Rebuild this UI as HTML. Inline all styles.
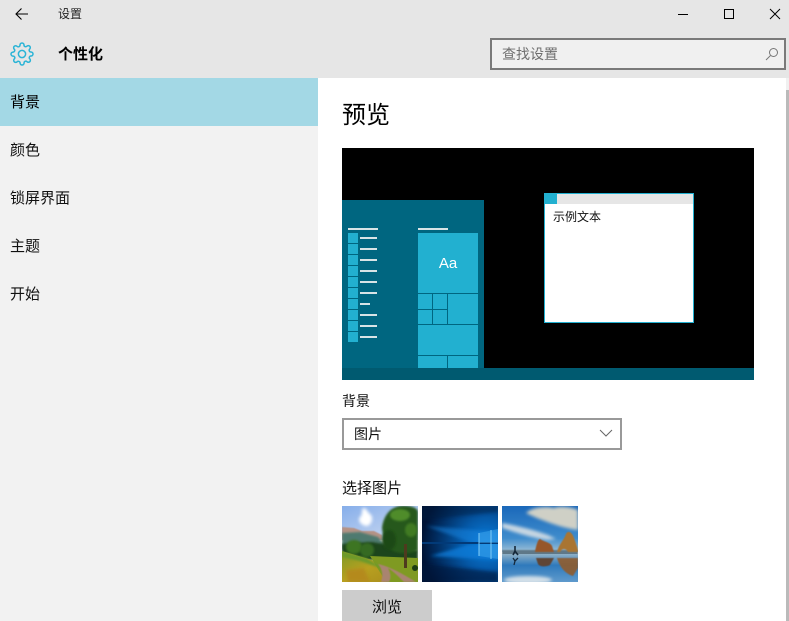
<!DOCTYPE html>
<html lang="zh">
<head>
<meta charset="utf-8">
<title>设置</title>
<style>
html,body{margin:0;padding:0;background:#fff}
#r{position:relative;width:789px;height:621px;overflow:hidden;background:#fff;font-family:"Liberation Sans","Noto Sans CJK SC",sans-serif;color:#000}
#r div,#r svg{position:absolute}
.t{white-space:nowrap;line-height:20px;height:20px;font-size:14px}
.c{background:#22b0d0}
.l{background:#d8e4e6;height:2px;left:360px;width:17px}
.s{left:348px;width:10px;height:10px;background:#22b0d0}
</style>
</head>
<body>
<div id="r">
<div style="left:0;top:0;width:789px;height:78px;background:#e6e6e6"></div>
<div style="left:0;top:78px;width:318px;height:543px;background:#f2f2f2"></div>
<div style="left:0;top:78px;width:318px;height:48px;background:#a3d8e5"></div>
<div style="left:786px;top:78px;width:3px;height:12px;background:#f0f0f0"></div>
<div style="left:786px;top:90px;width:3px;height:531px;background:#bababa"></div>

<svg style="left:15px;top:7px" width="14" height="14" viewBox="0 0 14 14" fill="none" stroke="#000" stroke-width="1.1"><path d="M1 7H13M6.5 1.5L1 7L6.5 12.5"/></svg>
<div class="t" style="left:58px;top:4px;font-size:12px;color:#222">设置</div>
<svg style="left:677px;top:8px" width="12" height="12" fill="none" stroke="#000" stroke-width="1"><path d="M1 6.5H11"/></svg>
<svg style="left:723px;top:8px" width="12" height="12" fill="none" stroke="#000" stroke-width="1"><rect x="1.5" y="1.5" width="9" height="9"/></svg>
<svg style="left:769px;top:8px" width="12" height="12" fill="none" stroke="#000" stroke-width="1"><path d="M1 1L11 11M11 1L1 11"/></svg>

<svg style="left:10px;top:42px" width="24" height="24" viewBox="0 0 24 24" fill="none" stroke="#2bb4d6" stroke-width="1.5"><circle cx="12" cy="12" r="3.6"/><path d="M19.4 15a1.65 1.65 0 0 0 .33 1.82l.06.06a2 2 0 0 1 0 2.83 2 2 0 0 1-2.83 0l-.06-.06a1.65 1.65 0 0 0-1.82-.33 1.65 1.65 0 0 0-1 1.51V21a2 2 0 0 1-2 2 2 2 0 0 1-2-2v-.09A1.65 1.65 0 0 0 9 19.4a1.65 1.65 0 0 0-1.82.33l-.06.06a2 2 0 0 1-2.83 0 2 2 0 0 1 0-2.83l.06-.06a1.65 1.65 0 0 0 .33-1.82 1.65 1.65 0 0 0-1.51-1H3a2 2 0 0 1-2-2 2 2 0 0 1 2-2h.09A1.65 1.65 0 0 0 4.6 9a1.65 1.65 0 0 0-.33-1.82l-.06-.06a2 2 0 0 1 0-2.83 2 2 0 0 1 2.83 0l.06.06a1.65 1.65 0 0 0 1.82.33H9a1.65 1.65 0 0 0 1-1.51V3a2 2 0 0 1 2-2 2 2 0 0 1 2 2v.09a1.65 1.65 0 0 0 1 1.51 1.65 1.65 0 0 0 1.82-.33l.06-.06a2 2 0 0 1 2.83 0 2 2 0 0 1 0 2.83l-.06.06a1.65 1.65 0 0 0-.33 1.82V9a1.65 1.65 0 0 0 1.51 1H21a2 2 0 0 1 2 2 2 2 0 0 1-2 2h-.09a1.65 1.65 0 0 0-1.51 1z"/></svg>
<div class="t" style="left:58px;top:45px;font-weight:bold;font-size:15px">个性化</div>

<div style="left:490px;top:38px;width:292px;height:28px;border:2px solid #7a7a7a;background:#f0f0f0"></div>
<div class="t" style="left:502px;top:44px;color:#6e6e6e">查找设置</div>
<svg style="left:765px;top:47px" width="14" height="14" fill="none" stroke="#777" stroke-width="1"><circle cx="8.5" cy="5.5" r="4"/><path d="M5.5 8.5L1 13"/></svg>

<div class="t" style="left:10px;top:93px;font-size:15px">背景</div>
<div class="t" style="left:10px;top:141px;color:#111;font-size:15px">颜色</div>
<div class="t" style="left:10px;top:189px;color:#111;font-size:15px">锁屏界面</div>
<div class="t" style="left:10px;top:237px;color:#111;font-size:15px">主题</div>
<div class="t" style="left:10px;top:285px;color:#111;font-size:15px">开始</div>

<div class="t" style="left:342px;top:101px;font-size:24px;line-height:30px;height:30px;color:#000">预览</div>

<div style="left:342px;top:148px;width:412px;height:232px;background:#000"></div>
<div style="left:342px;top:200px;width:142px;height:168px;background:#006680"></div>
<div style="left:342px;top:368px;width:412px;height:12px;background:#005a70"></div>

<div style="left:348px;top:228px;width:30px;height:2px;background:#d8e4e6"></div>
<div style="left:418px;top:228px;width:30px;height:2px;background:#d8e4e6"></div>
<div class="s" style="top:233px"></div><div class="l" style="top:237px"></div>
<div class="s" style="top:244px"></div><div class="l" style="top:248px"></div>
<div class="s" style="top:255px"></div><div class="l" style="top:259px"></div>
<div class="s" style="top:266px"></div><div class="l" style="top:270px"></div>
<div class="s" style="top:277px"></div><div class="l" style="top:281px"></div>
<div class="s" style="top:288px"></div><div class="l" style="top:292px"></div>
<div class="s" style="top:299px"></div><div class="l" style="top:303px;width:10px"></div>
<div class="s" style="top:310px"></div><div class="l" style="top:314px"></div>
<div class="s" style="top:321px"></div><div class="l" style="top:325px"></div>
<div class="s" style="top:332px"></div><div class="l" style="top:336px"></div>

<div class="c" style="left:418px;top:233px;width:60px;height:60px"></div>
<div class="t" style="left:418px;top:254px;width:60px;text-align:center;color:#fff;font-size:15px">Aa</div>
<div class="c" style="left:418px;top:294px;width:14px;height:15px"></div>
<div class="c" style="left:433px;top:294px;width:14px;height:15px"></div>
<div class="c" style="left:418px;top:310px;width:14px;height:14px"></div>
<div class="c" style="left:433px;top:310px;width:14px;height:14px"></div>
<div class="c" style="left:448px;top:294px;width:30px;height:30px"></div>
<div class="c" style="left:418px;top:325px;width:60px;height:30px"></div>
<div class="c" style="left:418px;top:356px;width:29px;height:12px"></div>
<div class="c" style="left:448px;top:356px;width:30px;height:12px"></div>

<div style="left:544px;top:193px;width:148px;height:128px;border:1px solid #22b0d0;background:#fff"></div>
<div style="left:545px;top:194px;width:148px;height:10px;background:#e6e6e6"></div>
<div class="c" style="left:545px;top:194px;width:12px;height:10px"></div>
<div class="t" style="left:553px;top:207px;font-size:12px;color:#111">示例文本</div>

<div class="t" style="left:342px;top:391px;color:#111">背景</div>
<div style="left:342px;top:418px;width:276px;height:28px;border:2px solid #999;background:#fff"></div>
<div class="t" style="left:354px;top:424px;color:#111">图片</div>
<svg style="left:599px;top:428px" width="14" height="10" fill="none" stroke="#666" stroke-width="1"><path d="M1 2L7 8L13 2"/></svg>

<div class="t" style="left:342px;top:479px;color:#111;font-size:15px">选择图片</div>

<!-- thumbnail 1 -->
<svg style="left:342px;top:506px" width="76" height="76" viewBox="0 0 76 76">
<defs>
<linearGradient id="a1" x1="0" y1="0" x2="1" y2="1"><stop offset="0" stop-color="#86aeea"/><stop offset="1" stop-color="#d2def2"/></linearGradient>
<linearGradient id="a2" x1="0" y1="0" x2="1" y2="1"><stop offset="0" stop-color="#7c9a26"/><stop offset=".5" stop-color="#b8a020"/><stop offset="1" stop-color="#a88c1c"/></linearGradient>
<filter id="b0" x="-20%" y="-20%" width="140%" height="140%"><feGaussianBlur stdDeviation=".5"/></filter>
<filter id="b1" x="-20%" y="-20%" width="140%" height="140%"><feGaussianBlur stdDeviation="1"/></filter>
<filter id="b2" x="-50%" y="-50%" width="200%" height="200%"><feGaussianBlur stdDeviation="1.6"/></filter>
<clipPath id="k1"><rect width="76" height="76"/></clipPath>
</defs>
<g clip-path="url(#k1)">
<rect width="76" height="34" fill="url(#a1)"/>
<path d="M21 2C25 2 25 6 28 8C32 11 30 19 25 20C20 20 15 15 18 11C21 9 19 5 21 2Z" fill="#fff" filter="url(#b2)"/>
<path d="M0 21L12 22L20 25L32 25L40 29V34H0Z" fill="#b59386" filter="url(#b0)"/>
<path d="M0 27L18 26L36 31L48 44H0Z" fill="#4f7a70" filter="url(#b1)"/>
<path d="M0 38L30 36L76 44V54H0Z" fill="#1b451a" filter="url(#b1)"/>
<ellipse cx="12" cy="41" rx="8" ry="7" fill="#3c7422" filter="url(#b1)"/>
<ellipse cx="25" cy="44" rx="7" ry="7" fill="#356b20" filter="url(#b1)"/>
<path d="M0 45L30 54L56 76H0Z" fill="url(#a2)"/>
<path d="M28 50L76 52V76H44Z" fill="#7f9a22"/>
<path d="M0 46L24 52L44 64L18 55L0 51Z" fill="#6c9a2c" filter="url(#b1)"/>
<path d="M4 64L22 62L28 76H6Z" fill="#b48a1e" filter="url(#b2)"/>
<path d="M36 58C46 60 58 66 74 76H62C56 70 52 66 46 62C49 68 49 72 47 76H39C41 70 41 64 36 58Z" fill="#a98470" filter="url(#b0)"/>
<path d="M40 22C42 6 52 -2 66 0C74 1 76 4 76 6V44C70 48 60 48 54 46C46 44 42 36 40 22Z" fill="#28591a" filter="url(#b1)"/>
<ellipse cx="58" cy="9" rx="10" ry="6" fill="#4f8c2a" filter="url(#b1)"/>
<ellipse cx="69" cy="24" rx="6" ry="7" fill="#3f7a24" filter="url(#b1)"/>
<ellipse cx="47" cy="34" rx="7" ry="10" fill="#1c4816" filter="url(#b1)"/>
<rect x="62" y="38" width="3" height="24" fill="#4e3a1e"/>
<circle cx="73" cy="62" r="3" fill="#1d3d14"/>
</g>
</svg>

<!-- thumbnail 2 -->
<svg style="left:422px;top:506px" width="76" height="76" viewBox="0 0 76 76">
<defs>
<radialGradient id="c1" cx=".85" cy=".5" r=".85"><stop offset="0" stop-color="#0b80e0"/><stop offset=".4" stop-color="#0559a8"/><stop offset=".8" stop-color="#012a5c"/><stop offset="1" stop-color="#001436"/></radialGradient>
<filter id="b3" x="-20%" y="-20%" width="140%" height="140%"><feGaussianBlur stdDeviation="1.6"/></filter>
<clipPath id="k2"><rect width="76" height="76"/></clipPath>
</defs>
<g clip-path="url(#k2)">
<rect width="76" height="76" fill="url(#c1)"/>
<path d="M76 26L4 20L50 37H76Z" fill="#1583de" opacity=".55" filter="url(#b3)"/>
<path d="M76 39V54L8 50L46 39Z" fill="#0c7cd8" opacity=".8" filter="url(#b3)"/>
<rect y="36" width="76" height="2" fill="#023a78"/>
<path d="M57 27L76 23V37H57ZM57 38H76V53L57 50Z" fill="#3fa8ee" opacity=".5"/>
<path d="M57 27V50M69 24V53" stroke="#83cdf6" stroke-width="1"/>
<path d="M0 0H76V6L0 14Z" fill="#001a40" opacity=".45" filter="url(#b3)"/>
<path d="M0 76H76V66L0 58Z" fill="#00143a" opacity=".6" filter="url(#b3)"/>
</g>
</svg>

<!-- thumbnail 3 -->
<svg style="left:502px;top:506px" width="76" height="76" viewBox="0 0 76 76">
<defs>
<linearGradient id="d1" x1="0" y1="0" x2="0" y2="1"><stop offset="0" stop-color="#1a68ba"/><stop offset=".7" stop-color="#3f8ccc"/><stop offset="1" stop-color="#a0c0d6"/></linearGradient>
<linearGradient id="d2" x1="0" y1="0" x2="0" y2="1"><stop offset="0" stop-color="#8fb0c6"/><stop offset=".4" stop-color="#2f7abc"/><stop offset="1" stop-color="#5f9acc"/></linearGradient>
<filter id="b4" x="-20%" y="-20%" width="140%" height="140%"><feGaussianBlur stdDeviation=".5"/></filter>
<filter id="b5" x="-30%" y="-30%" width="160%" height="160%"><feGaussianBlur stdDeviation="1.5"/></filter>
<clipPath id="k3"><rect width="76" height="76"/></clipPath>
</defs>
<g clip-path="url(#k3)">
<rect width="76" height="46" fill="url(#d1)"/>
<path d="M24 7C30 1 44 0 52 2C60 -1 72 2 76 4V24C60 22 38 14 24 7Z" fill="#cfd0c6" filter="url(#b5)"/>
<path d="M0 17C16 20 32 24 46 29L54 33L46 34C30 32 12 26 0 22Z" fill="#c6d6e2" filter="url(#b5)"/>
<rect y="44" width="76" height="5" fill="#5e7888" filter="url(#b4)"/>
<rect y="48" width="76" height="28" fill="url(#d2)"/>
<path d="M33 46C34 40 36 33 38 33C42 36 48 36 50 40L52 46Z" fill="#96562a" filter="url(#b4)"/>
<path d="M55 46C57 38 62 34 64 28C66 24 70 26 72 32C74 38 76 42 76 46H66C64 42 60 42 58 46Z" fill="#a97430" filter="url(#b4)"/>
<path d="M34 52H52L48 59C44 61 38 61 36 58Z" fill="#5e4434" filter="url(#b4)"/>
<path d="M55 52H76V62L71 70C64 68 58 62 55 52Z" fill="#8f5c2e" opacity=".9" filter="url(#b4)"/>
<path d="M13 40V45L11 49M13 45L16 49" stroke="#15283a" stroke-width="1.6" fill="none"/>
<path d="M11 52L13 55L12 59M13 55L16 52" stroke="#15283a" stroke-width="1.3" fill="none"/>
<ellipse cx="26" cy="74" rx="24" ry="4" fill="#d2dfe8" filter="url(#b5)"/>
</g>
</svg>

<div style="left:342px;top:590px;width:90px;height:31px;background:#ccc"></div>
<div class="t" style="left:342px;top:598px;width:90px;text-align:center;color:#111;font-size:15px">浏览</div>
</div>
</body>
</html>
